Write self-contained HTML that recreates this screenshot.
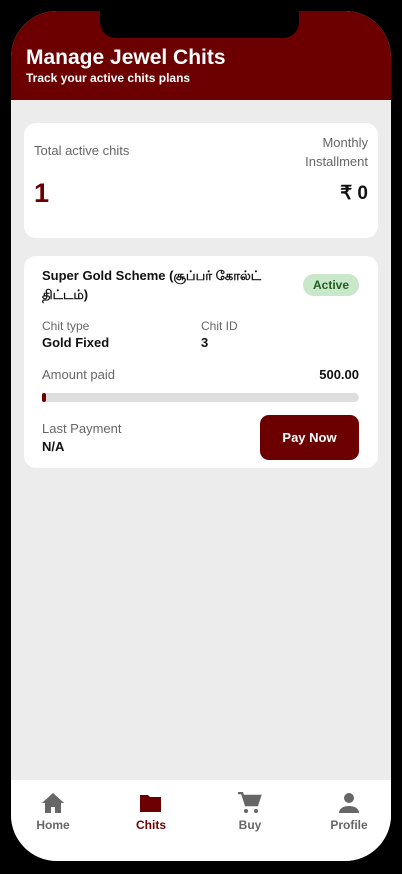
<!DOCTYPE html>
<html><head><meta charset="utf-8"><style>
*{margin:0;padding:0;box-sizing:border-box}
body{width:402px;height:874px;background:#000;font-family:"Liberation Sans",sans-serif;position:relative;overflow:hidden}
.screen{position:absolute;left:11px;top:11px;width:380px;height:850px;border-radius:46px;background:#ececec;overflow:hidden}
.hdr{position:absolute;left:0;top:0;width:380px;height:89px;background:#6c0000}
.notch{position:absolute;left:89px;top:0;width:199px;height:27px;background:#000;border-radius:0 0 16px 16px}
.t1{position:absolute;left:15px;top:35px;color:#fff;font-size:21px;font-weight:bold}
.t2{position:absolute;left:15px;top:60px;color:#fff;font-size:12px;font-weight:bold}
.card{position:absolute;left:13px;width:354px;background:#fff;border-radius:12px}
.g{color:#666;font-size:13px}
.b{color:#111;font-weight:bold;font-size:13px}
.nav{position:absolute;left:0;top:769px;width:380px;height:81px;background:#fff}
.ni{position:absolute;top:12px;width:80px;text-align:center;font-size:12px;color:#666;font-weight:bold}
.ni svg{display:block;margin:0 auto 4px}
</style></head><body>
<div class="screen">
<div class="hdr"><div class="notch"></div>
<div class="t1">Manage Jewel Chits</div>
<div class="t2">Track your active chits plans</div></div>
<div class="card" style="top:112px;height:115px">
<div class="g" style="position:absolute;left:10px;top:20px">Total active chits</div>
<div class="g" style="position:absolute;right:10px;top:10px;text-align:right;line-height:19px">Monthly<br>Installment</div>
<div style="position:absolute;left:10px;top:55px;color:#6c0000;font-size:27px;font-weight:bold">1</div>
<div style="position:absolute;right:10px;top:59px;color:#111;font-size:19px;font-weight:bold">₹ 0</div>
</div>
<div class="card" style="top:245px;height:212px">
<div class="b" style="position:absolute;left:18px;top:10px;width:250px;line-height:19px">Super Gold Scheme (சூப்பர் கோல்ட் திட்டம்)</div>
<div style="position:absolute;right:19px;top:18px;width:56px;height:22px;border-radius:11px;background:#c9e7c9;color:#1f5e22;font-size:12px;font-weight:bold;text-align:center;line-height:22px">Active</div>
<div class="g" style="position:absolute;left:18px;top:63px;font-size:12px">Chit type</div>
<div class="b" style="position:absolute;left:18px;top:79px">Gold Fixed</div>
<div class="g" style="position:absolute;left:177px;top:63px;font-size:12px">Chit ID</div>
<div class="b" style="position:absolute;left:177px;top:79px">3</div>
<div class="g" style="position:absolute;left:18px;top:111px">Amount paid</div>
<div class="b" style="position:absolute;right:19px;top:111px">500.00</div>
<div style="position:absolute;left:18px;top:137px;width:317px;height:9px;border-radius:5px;background:#dedede"><div style="width:4px;height:9px;background:#6c0000;border-radius:2px"></div></div>
<div class="g" style="position:absolute;left:18px;top:165px">Last Payment</div>
<div class="b" style="position:absolute;left:18px;top:183px">N/A</div>
<div style="position:absolute;left:236px;top:159px;width:99px;height:45px;border-radius:9px;background:#6c0000;color:#fff;font-size:13px;font-weight:bold;text-align:center;line-height:45px">Pay Now</div>
</div>
<div class="nav">
<div class="ni" style="left:2px"><svg width="24" height="22" viewBox="0 0 24 22"><path d="M12 1L1 11h3v10h6v-6h4v6h6V11h3z" fill="#666"/></svg>Home</div>
<div class="ni" style="left:100px;color:#6c0000"><svg width="24" height="22" viewBox="0 0 24 22"><path d="M1 3h8l2 2h11v15H1z" fill="#6c0000"/></svg>Chits</div>
<div class="ni" style="left:199px"><svg width="24" height="22" viewBox="0 0 24 22"><path d="M0 1h4l4 12h11l3-9H6" stroke="#666" stroke-width="2.5" fill="none"/><path d="M6 4h16l-3 9H8z" fill="#666"/><circle cx="8" cy="19" r="2" fill="#666"/><circle cx="18" cy="19" r="2" fill="#666"/></svg>Buy</div>
<div class="ni" style="left:298px"><svg width="24" height="22" viewBox="0 0 24 22"><circle cx="12" cy="6" r="5" fill="#666"/><path d="M2 21c0-5 5-7 10-7s10 2 10 7z" fill="#666"/></svg>Profile</div>
</div>
</div>
</body></html>
